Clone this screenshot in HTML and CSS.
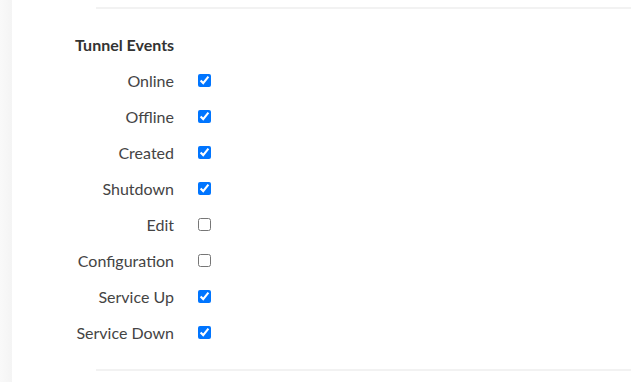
FILE: index.html
```html
<html>
  <head>
    <meta http-equiv="Content-Type" content="text/html; charset=utf-8" />
    <title>Tunnel Events</title>
    <link rel="stylesheet" href="styles.css">
  </head>
  <body>
    <div class="page">
      <div class="sidebar"></div>
      <div class="panel">
        <div class="rule"></div>
        <form name="events" action="#" class="events">
          <h4>Tunnel Events</h4>
          <ul>
            <li><label>Online</label><input type="checkbox" checked /></li>
            <li><label>Offline</label><input type="checkbox" checked /></li>
            <li><label>Created</label><input type="checkbox" checked /></li>
            <li><label>Shutdown</label><input type="checkbox" checked /></li>
            <li><label>Edit</label><input type="checkbox" /></li>
            <li><label>Configuration</label><input type="checkbox" /></li>
            <li><label>Service Up</label><input type="checkbox" checked /></li>
            <li><label>Service Down</label><input type="checkbox" checked /></li>
          </ul>
        </form>
        <div class="rule bottom"></div>
      </div>
    </div>
  </body>
</html>
```

FILE: styles.css
```css
body {
     margin: 0;
     font-family: Lato, "Open Sans", sans-serif;
     background: #fff;
}
.page {
     display: flex;
     height: 382px;
}
.sidebar {
     width: 12px;
     background: linear-gradient(to right, #f9f9f9, #f4f4f4);
}
.panel {
     flex: 1;
     padding-top: 7px;
}
.rule {
     height: 2px;
     margin-left: 84px;
     background-color: #f2f2f2;
}
.rule.bottom {
     margin-top: 19px;
}
.events {
     margin: 0;
     padding: 26px 0 0 63px;
}
.events h4 {
     margin: 0 0 8px 0;
     font-size: 16px;
     line-height: 19px;
     font-weight: bold;
     color: #333;
}
ul {
     margin: 0;
     padding: 0;
}
li {
     list-style-type: none;
     display: flex;
     align-items: center;
     height: 36px;
}
li label {
     width: 99px;
     text-align: right;
     font-size: 16px;
     color: #444;
}
li input {
     width: 13px;
     height: 13px;
     margin: 0 0 0 24px;
}
```
